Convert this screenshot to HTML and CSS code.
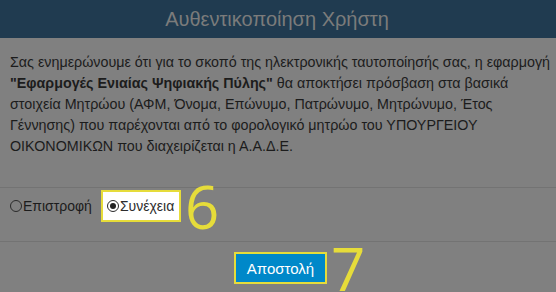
FILE: index.html
```html
<!DOCTYPE html>
<html lang="el">
<head>
    <meta charset="UTF-8">
    <title>Αυθεντικοποίηση Χρήστη</title>
    <link rel="stylesheet" href="styles.css">
</head>
<body>

<div class="modal">
    <!-- Header -->
    <div class="modal-header">
        <h2>Αυθεντικοποίηση Χρήστη</h2>
    </div>

    <!-- Body -->
    <div class="modal-body">
        <p>Σας ενημερώνουμε ότι για το σκοπό της ηλεκτρονικής ταυτοποίησής σας, η εφαρμογή
        <b>"Εφαρμογές Ενιαίας Ψηφιακής Πύλης"</b> θα αποκτήσει πρόσβαση στα βασικά
        στοιχεία Μητρώου (ΑΦΜ, Όνομα, Επώνυμο, Πατρώνυμο, Μητρώνυμο, Έτος
        Γέννησης) που παρέχονται από το φορολογικό μητρώο του ΥΠΟΥΡΓΕΙΟΥ
        ΟΙΚΟΝΟΜΙΚΩΝ που διαχειρίζεται η Α.Α.Δ.Ε.</p>
    </div>

    <!-- Choice -->
    <div class="modal-choice">
        <label class="choice"><span class="radio"></span>Επιστροφή</label>
        <label class="choice highlight"><span class="radio checked"></span>Συνέχεια<span class="step">6</span></label>
    </div>

    <!-- Footer -->
    <div class="modal-footer">
        <span class="btn-wrap"><button class="btn-send">Αποστολή</button><span class="step step-7">7</span></span>
    </div>
</div>

</body>
</html>
```

FILE: styles.css
```css
body {
    margin: 0;
    padding: 0;
    background-color: #808080;
    font-family: 'Liberation Sans', Arial, sans-serif;
    color: #1c1c1c;
}

.modal {
    width: 556px;
    height: 292px;
    overflow: hidden;
}

/* Header */
.modal-header {
    height: 38px;
    background-color: #203b50;
    display: flex;
    align-items: center;
    justify-content: center;
}

.modal-header h2 {
    margin: 0 0 0 -2px;
    font-size: 20px;
    font-weight: normal;
    color: #7b7b7b;
}

/* Body */
.modal-body {
    padding: 14px 0 30px 10px;
    border-bottom: 1px solid #737373;
}

.modal-body p {
    margin: 0;
    font-size: 14.3px;
    line-height: 21px;
}

/* Choice row */
.modal-choice {
    height: 51px;
    padding: 2px 0 0 10px;
    display: flex;
    align-items: flex-start;
    border-bottom: 1px solid #737373;
}

.choice {
    display: flex;
    align-items: center;
    height: 32px;
    font-size: 14px;
}

.radio {
    width: 10px;
    height: 10px;
    border: 1px solid #2a2a2a;
    border-radius: 50%;
    margin-right: 1px;
    display: flex;
    align-items: center;
    justify-content: center;
}

.radio.checked::after {
    content: '';
    width: 6px;
    height: 6px;
    border-radius: 50%;
    background-color: #222;
}

.highlight {
    position: relative;
    margin-left: 9px;
    height: 28px;
    padding: 0 5px 0 4px;
    background-color: #fff;
    border: 2px solid #e6dc3a;
    color: #2d2d2d;
}

/* Step numbers drawn over the page */
.step {
    position: absolute;
    left: 82px;
    top: -16px;
    font-family: 'Open Sans', sans-serif;
    font-size: 60px;
    line-height: 1;
    color: #e6dc3a;
}

/* Footer */
.modal-footer {
    display: flex;
    justify-content: center;
    padding: 10px 0 0 5px;
}

.btn-wrap {
    position: relative;
    display: flex;
    border: 2px solid #e6dc3a;
}

.btn-send {
    width: 89px;
    height: 28px;
    padding: 0;
    border: none;
    background-color: #0088c9;
    color: #fff;
    font-family: 'Liberation Sans', Arial, sans-serif;
    font-size: 15px;
}

.step-7 {
    left: 95px;
    top: -16px;
}
```
